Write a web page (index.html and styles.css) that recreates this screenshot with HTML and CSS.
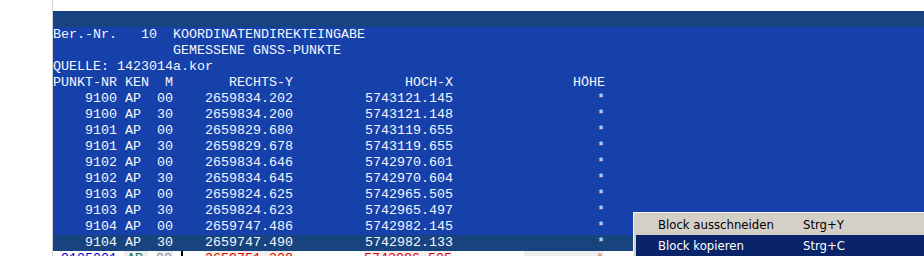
FILE: index.html
```html
<!DOCTYPE html>
<html lang="de">
<head>
    <meta charset="UTF-8">
    <title>Koordinatendirekteingabe</title>
    <link rel="stylesheet" href="styles.css">
</head>
<body>
    <div class="frame">
        <div class="titlebar"></div>

        <!-- Listing -->
        <div class="screen">
            <div class="line">Ber.-Nr.   10  KOORDINATENDIREKTEINGABE</div>
            <div class="line">               GEMESSENE GNSS-PUNKTE</div>
            <div class="line">QUELLE: 1423014a.kor</div>
            <div class="line">PUNKT-NR KEN  M       RECHTS-Y              HOCH-X               HÖHE</div>
            <div class="line">    9100 AP  00    2659834.202         5743121.145                  *</div>
            <div class="line">    9100 AP  30    2659834.200         5743121.148                  *</div>
            <div class="line">    9101 AP  00    2659829.680         5743119.655                  *</div>
            <div class="line">    9101 AP  30    2659829.678         5743119.655                  *</div>
            <div class="line">    9102 AP  00    2659834.646         5742970.601                  *</div>
            <div class="line">    9102 AP  30    2659834.645         5742970.604                  *</div>
            <div class="line">    9103 AP  00    2659824.625         5742965.505                  *</div>
            <div class="line">    9103 AP  30    2659824.623         5742965.497                  *</div>
            <div class="line">    9104 AP  00    2659747.486         5742982.145                  *</div>
            <div class="line current">    9104 AP  30    2659747.490         5742982.133                  *</div>
        </div>

        <!-- Entry row -->
        <div class="entry">
            <span class="cell nr">9105001</span>
            <span class="cell ken">AP</span>
            <span class="cell m">00</span>
            <span class="caret"></span>
            <span class="cell coord">2659751.308</span>
            <span class="cell coord wide">5742986.505</span>
            <span class="cell hoehe">*</span>
        </div>

        <!-- Context menu -->
        <div class="menu">
            <div class="menu-item"><span class="menu-label">Block ausschneiden</span><span>Strg+Y</span></div>
            <div class="menu-item active"><span class="menu-label">Block kopieren</span><span>Strg+C</span></div>
        </div>
    </div>
</body>
</html>
```

FILE: styles.css
```css
body {
    margin: 0;
    padding: 0;
    background-color: #fff;
}
.frame {
    position: relative;
    margin-left: 52px;
    border-left: 1px solid #d4d4d4;
    height: 256px;
    padding-top: 11px;
    box-sizing: border-box;
    overflow: hidden;
    font-family: "Liberation Mono", monospace;
    font-size: 13.333px;
}
.titlebar {
    height: 16px;
    background-color: #17447e;
}
.screen {
    background-color: #1641aa;
    color: #f4f7ff;
}
.line {
    height: 16px;
    line-height: 16px;
    white-space: pre;
}
.line.current {
    background-color: #17447e;
}
.entry {
    display: flex;
    height: 16px;
    line-height: 16px;
    background-color: #fff;
}
.cell {
    display: block;
    height: 16px;
    white-space: pre;
}
.nr {
    margin-left: 8px;
    width: 56px;
    color: #0000e0;
}
.ken {
    margin-left: 7px;
    padding-left: 3px;
    width: 21px;
    background-color: #eeeeee;
    color: #008060;
}
.m {
    margin-left: 8px;
    width: 17px;
    background-color: #eeeeee;
    color: #909090;
}
.caret {
    margin-left: 8px;
    width: 2px;
    height: 16px;
    background-color: #000;
}
.coord {
    margin-left: 22px;
    width: 88px;
    background-color: #f4f0f0;
    color: #e00000;
}
.coord.wide {
    margin-left: 71px;
}
.hoehe {
    margin-left: 72px;
    width: 80px;
    text-align: right;
    background-color: #eeeeee;
    color: #e08020;
}
.menu {
    position: absolute;
    left: 580px;
    top: 212px;
    width: 320px;
    padding: 1px 0 0 2px;
    border-top: 1px solid #f6f5f0;
    border-left: 1px solid #f6f5f0;
    background-color: #d4d0c8;
    font-family: "DejaVu Sans Condensed", "DejaVu Sans", sans-serif;
    font-stretch: condensed;
    font-size: 13px;
    color: #000;
}
.menu-item {
    display: flex;
    height: 21px;
    line-height: 21px;
    padding-left: 22px;
}
.menu-item.active {
    background-color: #0a246a;
    color: #fff;
}
.menu-label {
    width: 145px;
}
```
